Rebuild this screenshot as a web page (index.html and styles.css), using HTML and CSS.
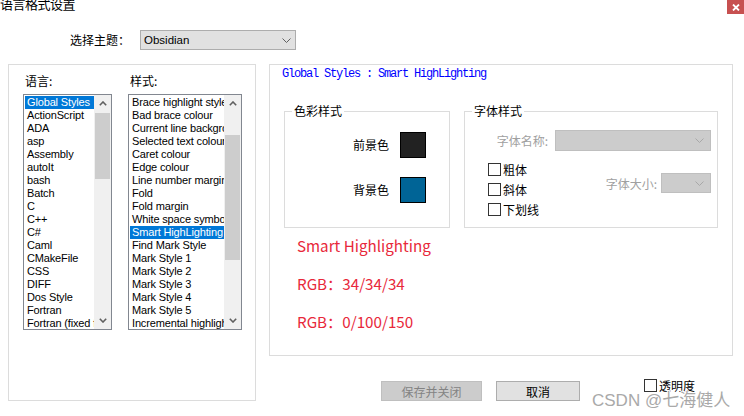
FILE: index.html
```html
<!DOCTYPE html>
<html lang="zh-CN">
<head>
<meta charset="utf-8">
<title>语言格式设置</title>
<link rel="stylesheet" href="styles.css">
</head>
<body>
<div class="window">
  <div class="titlebar">
    <span class="title">语言格式设置</span>
    <span class="close"><svg width="8" height="7" viewBox="0 0 8 7"><path d="M1 0.5 L7 6.5 M7 0.5 L1 6.5" stroke="#fff" stroke-width="1.8" fill="none"/></svg></span>
  </div>

  <div class="theme-row">
    <span class="theme-label">选择主题：</span>
    <div class="combo theme-combo">
      <span class="combo-text">Obsidian</span>
      <svg class="chev" width="9" height="5" viewBox="0 0 9 5"><path d="M0.5 0.5 L4.5 4.5 L8.5 0.5" stroke="#606060" stroke-width="1" fill="none"/></svg>
    </div>
  </div>

  <div class="main">
    <div class="group-left">
      <div class="col">
        <div class="list-label">语言:</div>
        <div class="listbox lang">
          <div class="items">
            <div class="item sel">Global Styles</div>
            <div class="item">ActionScript</div>
            <div class="item">ADA</div>
            <div class="item">asp</div>
            <div class="item">Assembly</div>
            <div class="item">autoIt</div>
            <div class="item">bash</div>
            <div class="item">Batch</div>
            <div class="item">C</div>
            <div class="item">C++</div>
            <div class="item">C#</div>
            <div class="item">Caml</div>
            <div class="item">CMakeFile</div>
            <div class="item">CSS</div>
            <div class="item">DIFF</div>
            <div class="item">Dos Style</div>
            <div class="item">Fortran</div>
            <div class="item">Fortran (fixed form)</div>
          </div>
          <div class="scrollbar">
            <div class="arrow"><svg width="8" height="5" viewBox="0 0 8 5"><path d="M0.8 4.2 L4 1 L7.2 4.2" stroke="#606060" stroke-width="1.6" fill="none"/></svg></div>
            <div class="track"><div class="thumb lang-thumb"></div></div>
            <div class="arrow"><svg width="8" height="5" viewBox="0 0 8 5"><path d="M0.8 0.8 L4 4 L7.2 0.8" stroke="#606060" stroke-width="1.6" fill="none"/></svg></div>
          </div>
        </div>
      </div>
      <div class="col">
        <div class="list-label">样式:</div>
        <div class="listbox styles">
          <div class="items">
            <div class="item">Brace highlight style</div>
            <div class="item">Bad brace colour</div>
            <div class="item">Current line background colour</div>
            <div class="item">Selected text colour</div>
            <div class="item">Caret colour</div>
            <div class="item">Edge colour</div>
            <div class="item">Line number margin</div>
            <div class="item">Fold</div>
            <div class="item">Fold margin</div>
            <div class="item">White space symbol</div>
            <div class="item sel">Smart HighLighting</div>
            <div class="item">Find Mark Style</div>
            <div class="item">Mark Style 1</div>
            <div class="item">Mark Style 2</div>
            <div class="item">Mark Style 3</div>
            <div class="item">Mark Style 4</div>
            <div class="item">Mark Style 5</div>
            <div class="item">Incremental highlight all</div>
          </div>
          <div class="scrollbar">
            <div class="arrow"><svg width="8" height="5" viewBox="0 0 8 5"><path d="M0.8 4.2 L4 1 L7.2 4.2" stroke="#606060" stroke-width="1.6" fill="none"/></svg></div>
            <div class="track"><div class="thumb style-thumb"></div></div>
            <div class="arrow"><svg width="8" height="5" viewBox="0 0 8 5"><path d="M0.8 0.8 L4 4 L7.2 0.8" stroke="#606060" stroke-width="1.6" fill="none"/></svg></div>
          </div>
        </div>
      </div>
    </div>

    <div class="right">
      <div class="panel">
        <div class="path">Global Styles : Smart HighLighting</div>
        <div class="groups">
          <fieldset class="box color-box">
            <legend>色彩样式</legend>
            <div class="swatch-row first"><span>前景色</span><span class="swatch fg"></span></div>
            <div class="swatch-row"><span>背景色</span><span class="swatch bg"></span></div>
          </fieldset>
          <fieldset class="box font-box">
            <legend>字体样式</legend>
            <div class="name-row">
              <span class="dim">字体名称:</span>
              <div class="combo dis name-combo"><svg class="chev" width="9" height="5" viewBox="0 0 9 5"><path d="M0.5 0.5 L4.5 4.5 L8.5 0.5" stroke="#a8a8a8" stroke-width="1" fill="none"/></svg></div>
            </div>
            <div class="lower">
              <div class="checks">
                <div class="check"><span class="cb"></span>粗体</div>
                <div class="check"><span class="cb"></span>斜体</div>
                <div class="check"><span class="cb"></span>下划线</div>
              </div>
              <div class="size">
                <span class="dim">字体大小:</span>
                <div class="combo dis size-combo"><svg class="chev" width="9" height="5" viewBox="0 0 9 5"><path d="M0.5 0.5 L4.5 4.5 L8.5 0.5" stroke="#a8a8a8" stroke-width="1" fill="none"/></svg></div>
              </div>
            </div>
          </fieldset>
        </div>
        <div class="notes">
          <div class="note">Smart Highlighting</div>
          <div class="note">RGB：34/34/34</div>
          <div class="note">RGB：0/100/150</div>
        </div>
      </div>
      <div class="buttons">
        <div class="btn disabled">保存并关闭</div>
        <div class="btn cancel">取消</div>
        <div class="check opacity"><span class="cb"></span>透明度</div>
      </div>
    </div>
  </div>

  <div class="watermark">CSDN @七海健人</div>
</div>
</body>
</html>
```

FILE: styles.css
```css
* { box-sizing: border-box; }

html, body {
  margin: 0;
  padding: 0;
  background: #ffffff;
}

body {
  font-family: "Noto Sans CJK SC", "Liberation Sans", sans-serif;
  font-size: 12px;
  color: #000;
}

.window {
  position: relative;
  width: 744px;
  height: 416px;
  overflow: hidden;
}

.titlebar {
  height: 14px;
  display: flex;
  justify-content: space-between;
  align-items: flex-start;
}

.title {
  font-size: 13px;
  line-height: 13px;
  margin-top: -3px;
  letter-spacing: -0.5px;
}

.close {
  width: 17px;
  height: 14px;
  background: #c75050;
  display: flex;
  align-items: center;
  justify-content: center;
}

.theme-row {
  margin-top: 16px;
  display: flex;
  align-items: center;
  padding-left: 70px;
}

.theme-label {
  width: 70px;
  font-size: 12px;
  line-height: 14px;
}

.combo {
  display: flex;
  align-items: center;
  justify-content: space-between;
  border: 1px solid #adadad;
  background: #e1e1e1;
}

.theme-combo {
  width: 156px;
  height: 20px;
  padding: 0 4px 0 3px;
}

.combo-text {
  font-family: "Liberation Sans", sans-serif;
  font-size: 11.5px;
  color: #000;
}

.main {
  margin-top: 14px;
  padding-left: 8px;
  display: flex;
  align-items: flex-start;
  gap: 13px;
}

.group-left {
  width: 248px;
  height: 337px;
  border: 1px solid #dcdcdc;
  padding: 9px 0 0 14px;
  display: flex;
  gap: 16px;
}

.list-label {
  height: 20px;
  line-height: 14px;
  font-size: 12px;
  padding-left: 2px;
}

.listbox {
  display: flex;
  height: 236px;
  border: 1px solid #828790;
  background: #fff;
}

.lang { width: 89px; }
.styles { width: 114px; }

.items {
  flex: 1;
  overflow: hidden;
  padding: 1px 0 0 1px;
  font-family: "Liberation Sans", sans-serif;
  font-size: 11px;
  letter-spacing: -0.15px;
}

.item {
  height: 13px;
  line-height: 13px;
  padding-left: 2px;
  white-space: nowrap;
  color: #000;
}

.item.sel {
  background: #0078d7;
  color: #fff;
}

.scrollbar {
  width: 17px;
  background: #f0f0f0;
  display: flex;
  flex-direction: column;
}

.arrow {
  height: 17px;
  display: flex;
  align-items: center;
  justify-content: center;
}

.track {
  flex: 1;
  padding: 0 1px;
}

.thumb {
  background: #cdcdcd;
}

.lang-thumb { height: 66px; margin-top: 1px; }
.style-thumb { height: 125px; margin-top: 23px; }

.right {
  width: 464px;
}

.panel {
  height: 292px;
  border: 1px solid #dcdcdc;
  padding-top: 3px;
}

.path {
  padding-left: 12px;
  font-family: "Liberation Mono", monospace;
  font-size: 12px;
  letter-spacing: -1.2px;
  line-height: 12px;
  color: #0000ff;
}

.groups {
  display: flex;
  gap: 14px;
  padding-left: 14px;
  margin-top: 25px;
}

.box {
  margin: 0;
  padding: 0;
  border: 1px solid #dcdcdc;
  height: 123px;
  min-inline-size: 0;
}

.box legend {
  margin-left: 7px;
  padding: 0 2px;
  font-size: 12px;
  line-height: 12px;
}

.color-box { width: 166px; }
.font-box { width: 254px; }

.swatch-row {
  display: flex;
  justify-content: flex-end;
  align-items: center;
  gap: 11px;
  padding-right: 23px;
  margin-top: 19px;
  line-height: 14px;
}

.swatch-row.first { margin-top: 15px; }

.swatch {
  width: 26px;
  height: 26px;
  border: 1px solid #000;
}

.swatch.fg { background: #222222; }
.swatch.bg { background: #006496; }

.dim { color: #a0a0a0; }

.name-row {
  display: flex;
  justify-content: flex-end;
  align-items: center;
  gap: 7px;
  padding-right: 6px;
  margin-top: 13px;
}

.combo.dis {
  background: #cccccc;
  border-color: #bfbfbf;
  justify-content: flex-end;
  padding-right: 6px;
}

.name-combo { width: 156px; height: 21px; }
.size-combo { width: 50px; height: 20px; }

.lower {
  display: flex;
  justify-content: space-between;
  padding-left: 23px;
  padding-right: 6px;
  margin-top: 12px;
}

.checks {
  display: flex;
  flex-direction: column;
  gap: 7px;
}

.check {
  display: flex;
  align-items: center;
  gap: 2px;
  height: 13px;
  line-height: 13px;
}

.cb {
  width: 13px;
  height: 13px;
  border: 1px solid #333;
  background: #fff;
}

.size {
  display: flex;
  align-items: center;
  gap: 4px;
  margin-top: 10px;
  align-self: flex-start;
}

.notes {
  padding-left: 27px;
  margin-top: 7px;
}

.note {
  font-size: 15.2px;
  line-height: 20px;
  color: #e8283a;
  margin-bottom: 18px;
}

.buttons {
  display: flex;
  align-items: flex-start;
  margin-top: 25px;
  padding-left: 112px;
}

.btn {
  height: 20px;
  display: flex;
  align-items: center;
  justify-content: center;
  font-size: 12px;
  border: 1px solid #adadad;
  background: #e1e1e1;
}

.btn.disabled {
  width: 101px;
  background: #cccccc;
  border-color: #bfbfbf;
  color: #838383;
}

.btn.cancel {
  width: 84px;
  margin-left: 14px;
}

.opacity {
  margin-left: 64px;
  margin-top: -2px;
}

.watermark {
  position: absolute;
  left: 592px;
  top: 391px;
  font-family: "Liberation Sans", "Noto Sans CJK SC", sans-serif;
  font-size: 17px;
  line-height: 20px;
  color: #a9a9a9;
  text-shadow: 1px 1px 0 #fff, -1px -1px 0 #fff, 1px -1px 0 #fff, -1px 1px 0 #fff;
}
```
